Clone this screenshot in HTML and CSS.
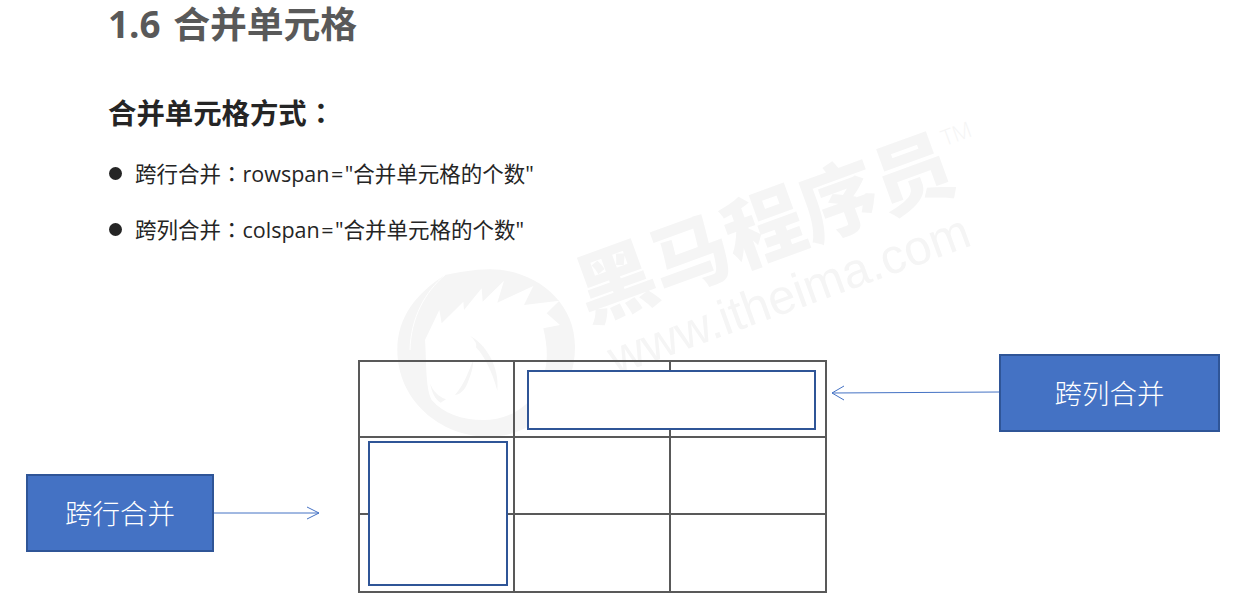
FILE: index.html
```html
<!DOCTYPE html>
<html lang="zh-CN">
<head>
  <meta charset="UTF-8" />
  <title>合并单元格</title>
  <link rel="stylesheet" href="styles.css">
</head>
<body>
  <div class="slide">
    <!-- watermark sits behind everything -->
    <div class="watermark">
      <svg class="wm-logo" width="200" height="190" viewBox="0 0 600 570">
        <path fill-rule="evenodd" fill="#f5f5f5" d="M165 45 C80 100 22 170 22 270 C22 420 150 530 295 530 C440 530 555 410 555 260 C555 120 430 28 300 28 C250 28 205 38 165 45 Z M105 240 L148 150 L155 190 L220 125 L222 150 L275 85 L278 125 L342 62 L322 128 L430 78 L402 135 L508 122 L470 160 L510 195 L460 205 C480 290 470 340 440 395 C400 455 340 480 280 480 C215 480 160 460 125 420 C105 380 110 300 105 240 Z"/>
        <path fill="none" stroke="#fff" stroke-width="3" d="M165 45 C105 95 62 175 60 270"/>
        <path fill="#f5f5f5" d="M240 228 C285 250 330 320 322 392 C308 340 285 290 258 262 C262 250 252 238 240 228 Z"/>
        <path fill="#f5f5f5" d="M250 300 C235 335 225 370 195 405 C215 402 228 385 236 360 C244 340 250 320 250 300 Z"/>
        <path fill="#f5f5f5" d="M120 370 C125 395 135 420 152 428 L168 418 C145 410 130 395 120 370 Z"/>
      </svg>
      <div class="wm-name">黑马程序员<sup class="wm-tm">TM</sup></div>
      <div class="wm-url">www.itheima.com</div>
    </div>

    <h1 class="title">1.6 合并单元格</h1>
    <h2 class="subtitle">合并单元格方式<span class="colon" lang="zh-TW">：</span></h2>
    <ul class="points">
      <li><span>跨行合并<span class="colon" lang="zh-TW">：</span>rowspan<span class="eq">=</span>"合并单元格的个数"</span></li>
      <li><span>跨列合并<span class="colon" lang="zh-TW">：</span>colspan<span class="eq">=</span>"合并单元格的个数"</span></li>
    </ul>

    <div class="diagram">
      <div class="label label-row">跨行合并</div>
      <svg class="arrow arrow-row" width="108" height="14" viewBox="0 0 108 14">
        <path d="M0 7 H105 M93 1 L105 7 L93 13" fill="none" stroke="#4472c4" stroke-width="1"/>
      </svg>

      <div class="table">
        <div class="cell"></div><div class="cell"></div><div class="cell"></div>
        <div class="cell"></div><div class="cell"></div><div class="cell"></div>
        <div class="cell"></div><div class="cell"></div><div class="cell"></div>
        <div class="merge merge-col"></div>
        <div class="merge merge-row"></div>
      </div>

      <svg class="arrow arrow-col" width="170" height="16" viewBox="0 0 170 16">
        <path d="M169 7 L2 8 M14 1 L2 8 L14 15" fill="none" stroke="#4472c4" stroke-width="1"/>
      </svg>
      <div class="label label-col">跨列合并</div>
    </div>
  </div>
</body>
</html>
```

FILE: styles.css
```css
* {
  box-sizing: border-box;
}

body {
  margin: 0;
  background: #fff;
  font-family: "Open Sans", "Noto Sans CJK SC", sans-serif;
  color: #252525;
  overflow: hidden;
}

.slide {
  position: relative;
  width: 1238px;
  height: 603px;
  padding-left: 108px;
  overflow: hidden;
}

.colon {
  font-family: "Noto Sans CJK TC", sans-serif;
}

.eq {
  margin: 0 1.5px;
}

.title {
  position: relative;
  margin: 0;
  font-size: 36.8px;
  line-height: 48px;
  font-weight: 700;
  word-spacing: 3px;
  color: #595959;
}

.subtitle {
  position: relative;
  margin: 45px 0 0;
  font-size: 28.4px;
  line-height: 38px;
  font-weight: 700;
  color: #252525;
}

.points {
  position: relative;
  margin: 26px 0 0;
  padding: 0 0 0 1px;
  list-style: none;
  font-size: 21.5px;
  line-height: 30px;
}

.points li {
  display: flex;
  align-items: center;
  gap: 13px;
  margin-bottom: 24.5px;
}

.points li::before {
  content: "";
  width: 13px;
  height: 13px;
  border-radius: 50%;
  background: #252525;
}

.watermark {
  position: absolute;
  left: 0;
  top: 0;
  width: 100%;
  height: 100%;
}

.wm-logo {
  position: absolute;
  left: 390px;
  top: 260px;
}

.wm-name {
  position: absolute;
  left: 564px;
  top: 255px;
  font-size: 79px;
  line-height: 84px;
  font-weight: 900;
  color: #f5f5f5;
  white-space: nowrap;
  transform: rotate(-20deg);
  transform-origin: left top;
}

.wm-tm {
  font-size: 22px;
  font-weight: 300;
  vertical-align: 44px;
  line-height: 0;
}

.wm-url {
  position: absolute;
  left: 600px;
  top: 333px;
  font-family: "Liberation Sans", sans-serif;
  font-size: 49px;
  line-height: 56px;
  color: #f5f5f5;
  white-space: nowrap;
  transform: rotate(-20deg);
  transform-origin: left top;
}

/* diagram pieces are placed on a free canvas */
.diagram {
  position: absolute;
  left: 0;
  top: 0;
}

.table {
  position: absolute;
  left: 358px;
  top: 360px;
  width: 469px;
  height: 233px;
  display: grid;
  grid-template-columns: 155px 156px 156px;
  grid-template-rows: 76px 77px 78px;
  border-top: 2px solid #595959;
  border-left: 2px solid #595959;
}

.cell {
  border-right: 2px solid #595959;
  border-bottom: 2px solid #595959;
}

.merge {
  position: absolute;
  background: #fff;
  border: 2px solid #2f5597;
}

.merge-col {
  left: 167px;
  top: 8px;
  width: 289px;
  height: 60px;
}

.merge-row {
  left: 8px;
  top: 79px;
  width: 140px;
  height: 145px;
}

.label {
  position: absolute;
  display: flex;
  align-items: center;
  justify-content: center;
  height: 78px;
  padding-bottom: 2px;
  background: #4472c4;
  border: 2px solid #2f5597;
  color: #fff;
  font-family: "Noto Sans CJK SC", sans-serif;
  font-size: 27.5px;
  font-weight: 300;
}

.label-row {
  left: 26px;
  top: 474px;
  width: 188px;
}

.label-col {
  left: 999px;
  top: 354px;
  width: 221px;
}

.arrow {
  position: absolute;
}

.arrow-row {
  left: 214px;
  top: 506px;
}

.arrow-col {
  left: 830px;
  top: 385px;
}
```
